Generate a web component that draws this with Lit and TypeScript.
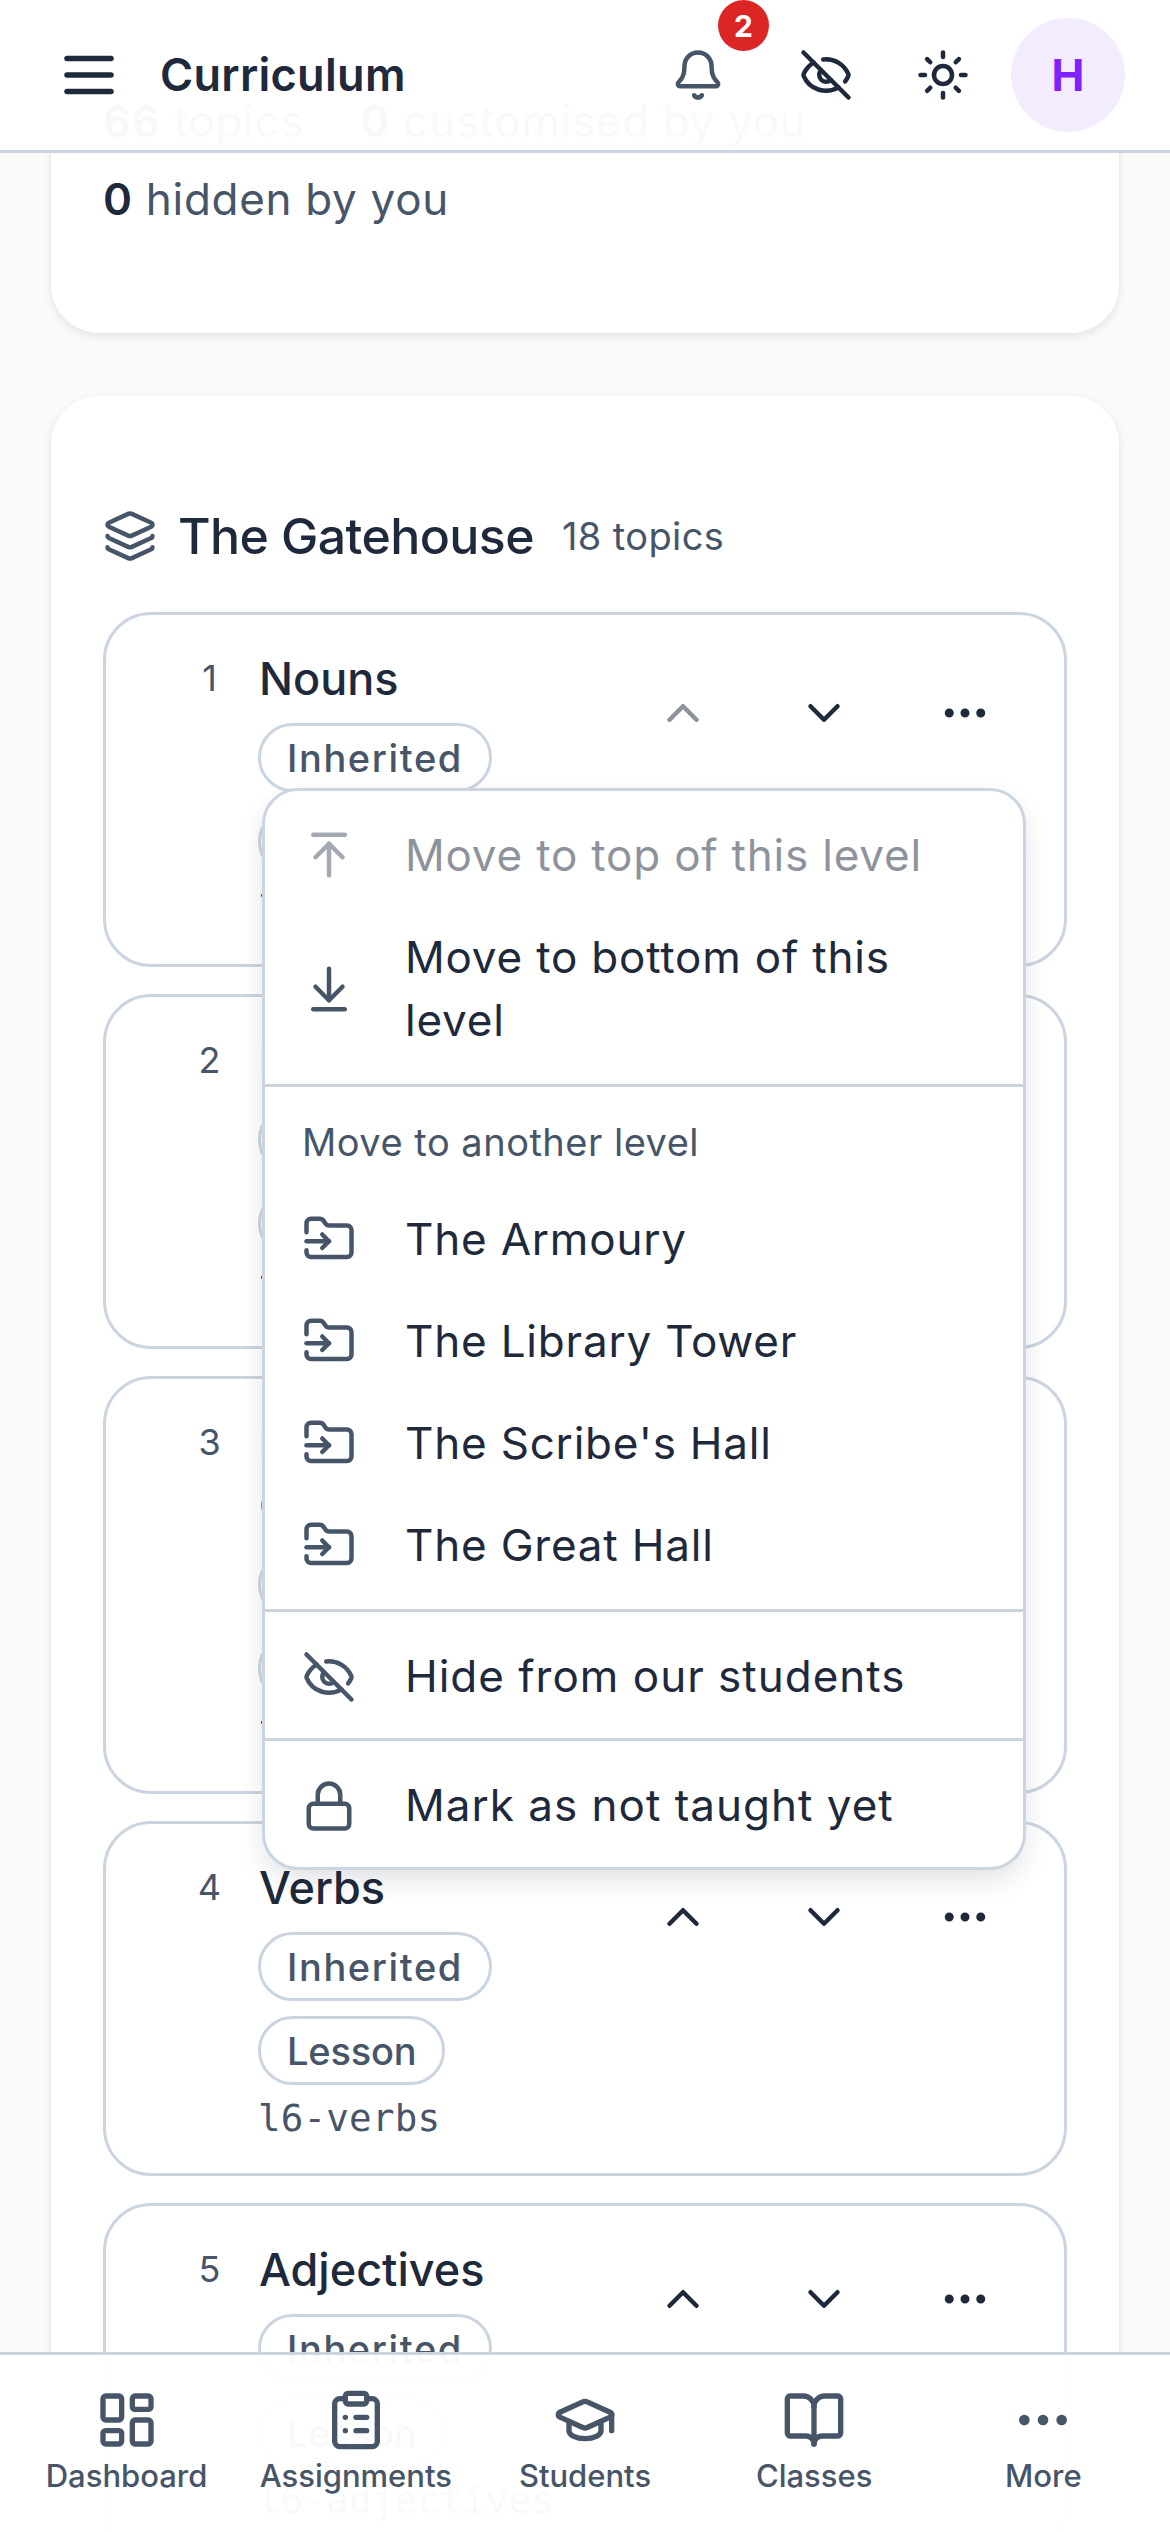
import { LitElement, html, css, svg } from 'lit';
import { customElement } from 'lit/decorators.js';

// lucide paths, drawn on a 24 box
const paths: Record<string, any> = {
  menu: svg`<path d="M4 12h16"/><path d="M4 6h16"/><path d="M4 18h16"/>`,
  bell: svg`<path d="M10.268 21a2 2 0 0 0 3.464 0"/><path d="M3.262 15.326A1 1 0 0 0 4 17h16a1 1 0 0 0 .74-1.673C19.41 13.956 18 12.499 18 8A6 6 0 0 0 6 8c0 4.499-1.411 5.956-2.738 7.326"/>`,
  eyeOff: svg`<path d="M10.733 5.076a10.744 10.744 0 0 1 11.205 6.575 1 1 0 0 1 0 .696 10.747 10.747 0 0 1-1.444 2.49"/><path d="M14.084 14.158a3 3 0 0 1-4.242-4.242"/><path d="M17.479 17.499a10.75 10.75 0 0 1-15.417-5.151 1 1 0 0 1 0-.696 10.75 10.75 0 0 1 4.446-5.143"/><path d="m2 2 20 20"/>`,
  sun: svg`<circle cx="12" cy="12" r="4"/><path d="M12 2v2"/><path d="M12 20v2"/><path d="m4.93 4.93 1.41 1.41"/><path d="m17.66 17.66 1.41 1.41"/><path d="M2 12h2"/><path d="M20 12h2"/><path d="m6.34 17.66-1.41 1.41"/><path d="m19.07 4.93-1.41 1.41"/>`,
  layers: svg`<path d="M12.83 2.18a2 2 0 0 0-1.66 0L2.6 6.08a1 1 0 0 0 0 1.83l8.58 3.91a2 2 0 0 0 1.66 0l8.58-3.9a1 1 0 0 0 0-1.83z"/><path d="M2 12a1 1 0 0 0 .58.91l8.6 3.91a2 2 0 0 0 1.65 0l8.58-3.9A1 1 0 0 0 22 12"/><path d="M2 17a1 1 0 0 0 .58.91l8.6 3.91a2 2 0 0 0 1.65 0l8.58-3.9A1 1 0 0 0 22 17"/>`,
  up: svg`<path d="m18 15-6-6-6 6"/>`,
  down: svg`<path d="m6 9 6 6 6-6"/>`,
  dots: svg`<circle cx="12" cy="12" r="1"/><circle cx="19" cy="12" r="1"/><circle cx="5" cy="12" r="1"/>`,
  toTop: svg`<path d="M5 3h14"/><path d="m18 13-6-6-6 6"/><path d="M12 7v14"/>`,
  toBottom: svg`<path d="M19 21H5"/><path d="m18 11-6 6-6-6"/><path d="M12 17V3"/>`,
  folder: svg`<path d="M2 9V5a2 2 0 0 1 2-2h3.9a2 2 0 0 1 1.69.9l.81 1.2a2 2 0 0 0 1.67.9H20a2 2 0 0 1 2 2v10a2 2 0 0 1-2 2H4a2 2 0 0 1-2-2v-1"/><path d="M2 13h10"/><path d="m9 16 3-3-3-3"/>`,
  lock: svg`<rect width="18" height="11" x="3" y="11" rx="2" ry="2"/><path d="M7 11V7a5 5 0 0 1 10 0v4"/>`,
  dashboard: svg`<rect width="7" height="9" x="3" y="3" rx="1"/><rect width="7" height="5" x="14" y="3" rx="1"/><rect width="7" height="9" x="14" y="12" rx="1"/><rect width="7" height="5" x="3" y="16" rx="1"/>`,
  clipboard: svg`<rect width="8" height="4" x="8" y="2" rx="1" ry="1"/><path d="M16 4h2a2 2 0 0 1 2 2v14a2 2 0 0 1-2 2H6a2 2 0 0 1-2-2V6a2 2 0 0 1 2-2h2"/><path d="M12 11h4"/><path d="M12 16h4"/><path d="M8 11h.01"/><path d="M8 16h.01"/>`,
  cap: svg`<path d="M21.42 10.922a1 1 0 0 0-.019-1.838L12.83 5.18a2 2 0 0 0-1.66 0L2.6 9.08a1 1 0 0 0 0 1.832l8.57 3.908a2 2 0 0 0 1.66 0z"/><path d="M22 10v6"/><path d="M6 12.5V16a6 3 0 0 0 12 0v-3.5"/>`,
  book: svg`<path d="M12 7v14"/><path d="M3 18a1 1 0 0 1-1-1V4a1 1 0 0 1 1-1h5a4 4 0 0 1 4 4 4 4 0 0 1 4-4h5a1 1 0 0 1 1 1v13a1 1 0 0 1-1 1h-6a3 3 0 0 0-3 3 3 3 0 0 0-3-3z"/>`,
};

const icon = (name: string, size: number) => html`<svg
  class="icon"
  width=${size}
  height=${size}
  viewBox="0 0 24 24"
  fill="none"
  stroke="currentColor"
  stroke-width="2"
  stroke-linecap="round"
  stroke-linejoin="round"
>${paths[name]}</svg>`;

const topics = [
  { n: 1, title: 'Nouns', code: 'l6-nouns', first: true },
  { n: 2, title: 'Pronouns', code: 'l6-pronouns' },
  { n: 3, title: 'Pronouns and Common nouns', code: 'l6-common' },
  { n: 4, title: 'Verbs', code: 'l6-verbs' },
  { n: 5, title: 'Adjectives', code: 'l6-adjectives' },
];

const levels = ['The Armoury', 'The Library Tower', "The Scribe's Hall", 'The Great Hall'];

const tabs = [
  { label: 'Dashboard', icon: 'dashboard' },
  { label: 'Assignments', icon: 'clipboard' },
  { label: 'Students', icon: 'cap' },
  { label: 'Classes', icon: 'book' },
  { label: 'More', icon: 'dots' },
];

@customElement('app-root')
export class AppRoot extends LitElement {
  static styles = css`
    :host {
      display: block;
      position: relative;
      width: 1170px;
      height: 2532px;
      overflow: hidden;
      background: #fafafa;
      font-family: Inter, 'Noto Sans', sans-serif;
      color: #1e293b;
    }
    .icon {
      display: block;
      flex: none;
    }
    .topbar {
      position: absolute;
      top: 0;
      left: 0;
      right: 0;
      height: 153px;
      box-sizing: border-box;
      border-bottom: 3px solid #cbd5e1;
      background: rgba(255, 255, 255, 0.97);
      display: flex;
      align-items: center;
      padding-left: 56px;
      padding-right: 45px;
      z-index: 5;
    }
    .page-title {
      margin-left: 38px;
      margin-bottom: 2px;
      font-size: 45px;
      font-weight: 600;
      letter-spacing: 0.3px;
      flex: 1;
    }
    .tool {
      width: 117px;
      height: 132px;
      display: flex;
      align-items: center;
      justify-content: center;
      position: relative;
    }
    .tool.bell {
      width: 140px;
      padding-left: 2px;
      box-sizing: border-box;
      color: #475569;
    }
    .badge {
      position: absolute;
      left: 91px;
      top: -9px;
      width: 51px;
      height: 51px;
      border-radius: 50%;
      background: #dc2626;
      color: #fff;
      font-size: 30px;
      font-weight: 700;
      display: flex;
      align-items: center;
      justify-content: center;
    }
    .avatar {
      width: 114px;
      height: 114px;
      margin-left: 10px;
      border-radius: 50%;
      background: #f3ecfe;
      color: #7f22fe;
      font-size: 44px;
      font-weight: 700;
      display: flex;
      align-items: center;
      justify-content: center;
    }
    main {
      margin-top: -60px;
      padding: 0 51px;
      display: flex;
      flex-direction: column;
      gap: 63px;
    }
    .card {
      background: #fff;
      border-radius: 48px;
      box-shadow: 0 3px 9px rgba(15, 23, 42, 0.1);
    }
    .stats {
      padding: 150px 52px 102px;
      font-size: 44px;
      line-height: 63px;
      letter-spacing: 0.7px;
      color: #475569;
      display: flex;
      flex-wrap: wrap;
      column-gap: 56px;
      row-gap: 15px;
    }
    .stats span {
      white-space: nowrap;
    }
    .stats b {
      color: #1e293b;
      font-weight: 600;
    }
    .level {
      padding: 107px 52px 0;
      height: 2400px;
      box-sizing: border-box;
    }
    .level-head {
      display: flex;
      align-items: center;
      gap: 21px;
      height: 66px;
      margin-bottom: 43px;
    }
    .level-head .icon {
      color: #475569;
    }
    .level-head h2 {
      margin: 0;
      font-size: 50px;
      font-weight: 500;
      letter-spacing: -0.6px;
    }
    .level-head small {
      margin-left: 7px;
      font-size: 38px;
      color: #475569;
      letter-spacing: 0.4px;
    }
    .topics {
      display: flex;
      flex-direction: column;
      gap: 27px;
    }
    .topic {
      border: 3px solid #cbd5e1;
      border-radius: 48px;
      padding: 32px 33px 28px 90px;
      display: flex;
      align-items: flex-start;
    }
    .num {
      width: 27px;
      margin-right: 35px;
      flex: none;
      text-align: center;
      font-size: 36px;
      line-height: 63px;
      color: #475569;
    }
    .body {
      flex: 1;
      min-width: 0;
    }
    .body h3 {
      margin: 0 0 13px;
      padding-left: 1px;
      font-size: 45px;
      line-height: 63px;
      font-weight: 500;
    }
    .chips {
      display: flex;
      flex-direction: column;
      align-items: flex-start;
      gap: 15px;
    }
    .chip {
      height: 69px;
      box-sizing: border-box;
      padding: 0 26px;
      border: 3px solid #cbd5e1;
      border-radius: 36px;
      display: flex;
      align-items: center;
      font-size: 38px;
      font-weight: 500;
      color: #475569;
    }
    .chip.inherited {
      letter-spacing: 1.6px;
    }
    .chip.lesson {
      letter-spacing: -0.2px;
    }
    .code {
      margin-top: 6px;
      font-family: 'DejaVu Sans Mono', monospace;
      font-size: 37.5px;
      line-height: 54px;
      letter-spacing: 0.2px;
      color: #475569;
    }
    .actions {
      display: flex;
      gap: 9px;
      flex: none;
      margin: -5px 0 0 12px;
    }
    .topic.first .actions {
      margin-top: 0;
    }
    .act {
      width: 132px;
      height: 132px;
      display: flex;
      align-items: center;
      justify-content: center;
    }
    .act.off {
      opacity: 0.5;
    }
    .popup {
      position: absolute;
      left: 262px;
      top: 788px;
      width: 764px;
      box-sizing: border-box;
      border: 3px solid #cbd5e1;
      border-radius: 36px;
      background: #fff;
      box-shadow: 0 12px 30px -6px rgba(15, 23, 42, 0.16);
      z-index: 3;
    }
    .group {
      padding: 13px 0;
    }
    .group.short {
      padding: 12px 0;
    }
    .group + .group {
      border-top: 3px solid #cbd5e1;
    }
    .row {
      display: flex;
      align-items: center;
      gap: 49px;
      padding: 19.5px 37px;
      font-size: 44px;
      line-height: 63px;
      letter-spacing: 0.8px;
    }
    .group.short .row {
      padding: 21px 37px 18px;
      letter-spacing: 1px;
    }
    .row .icon {
      color: #475569;
    }
    .row.off {
      opacity: 0.5;
    }
    .group-title {
      padding: 15px 37px 19px;
      font-size: 38px;
      line-height: 54px;
      color: #475569;
      letter-spacing: 0.5px;
    }
    .tabs {
      position: absolute;
      left: 0;
      right: 0;
      bottom: 0;
      height: 180px;
      box-sizing: border-box;
      border-top: 3px solid #cbd5e1;
      background: rgba(255, 255, 255, 0.97);
      padding: 0 12px;
      display: grid;
      grid-template-columns: repeat(5, 1fr);
      z-index: 5;
    }
    .tab {
      display: flex;
      flex-direction: column;
      align-items: center;
      padding-top: 33px;
      color: #475569;
      font-size: 31px;
      font-weight: 500;
      line-height: 42px;
      gap: 3px;
    }
  `;

  renderTopic(t: any) {
    return html`<div class="topic ${t.first ? 'first' : ''}">
      <div class="num">${t.n}</div>
      <div class="body">
        <h3>${t.title}</h3>
        <div class="chips">
          <span class="chip inherited">Inherited</span>
          <span class="chip lesson">Lesson</span>
        </div>
        <div class="code">${t.code}</div>
      </div>
      <div class="actions">
        <div class="act ${t.first ? 'off' : ''}">${icon('up', 54)}</div>
        <div class="act">${icon('down', 54)}</div>
        <div class="act">${icon('dots', 54)}</div>
      </div>
    </div>`;
  }

  render() {
    return html`
      <header class="topbar">
        ${icon('menu', 66)}
        <div class="page-title">Curriculum</div>
        <div class="tool bell">${icon('bell', 54)}<span class="badge">2</span></div>
        <div class="tool">${icon('eyeOff', 54)}</div>
        <div class="tool">${icon('sun', 54)}</div>
        <div class="avatar">H</div>
      </header>

      <main>
        <section class="card stats">
          <span><b>66</b> topics</span>
          <span><b>0</b> customised by you</span>
          <span><b>0</b> hidden by you</span>
        </section>
        <section class="card level">
          <div class="level-head">
            ${icon('layers', 54)}
            <h2>The Gatehouse</h2>
            <small>18 topics</small>
          </div>
          <div class="topics">${topics.map((t) => this.renderTopic(t))}</div>
        </section>
      </main>

      <div class="popup">
        <div class="group">
          <div class="row off">${icon('toTop', 54)}<span>Move to top of this level</span></div>
          <div class="row">${icon('toBottom', 54)}<span>Move to bottom of this level</span></div>
        </div>
        <div class="group">
          <div class="group-title">Move to another level</div>
          ${levels.map((l) => html`<div class="row">${icon('folder', 54)}<span>${l}</span></div>`)}
        </div>
        <div class="group short">
          <div class="row">${icon('eyeOff', 54)}<span>Hide from our students</span></div>
        </div>
        <div class="group short">
          <div class="row">${icon('lock', 54)}<span>Mark as not taught yet</span></div>
        </div>
      </div>

      <nav class="tabs">
        ${tabs.map((t) => html`<div class="tab">${icon(t.icon, 64)}<span>${t.label}</span></div>`)}
      </nav>
    `;
  }
}
